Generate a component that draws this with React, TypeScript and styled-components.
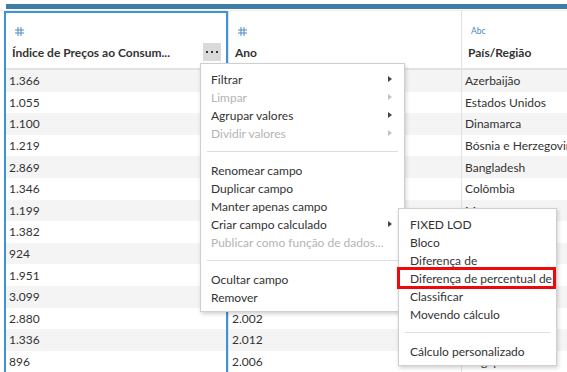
import * as React from 'react';
import styled, { createGlobalStyle } from 'styled-components';

const GlobalStyle = createGlobalStyle`
  html, body {
    margin: 0;
    padding: 0;
    background: #ffffff;
    overflow: hidden;
  }
  body {
    font-family: Lato, 'Open Sans', 'Liberation Sans', sans-serif;
    font-size: 12px;
    color: #333333;
  }
`;

enum Colors {
  text = '#333333',
  disabled = '#b4b4b4',
  selected = '#3d93da',
  icon = '#4a8ac0',
  stripe = '#f4f4f4',
  grid = '#e2e2e2',
}

type ColumnData = {
  type: 'number' | 'text';
  title: string;
  width: number;
  selected?: boolean;
  values: string[];
};

const columns: ColumnData[] = [
  {
    type: 'number',
    title: 'Índice de Preços ao Consum...',
    width: 224,
    selected: true,
    values: ['1.366', '1.055', '1.100', '1.219', '2.869', '1.346', '1.199', '1.382', '924', '1.951', '3.099', '2.880', '1.336', '896'],
  },
  {
    type: 'number',
    title: 'Ano',
    width: 233,
    values: ['2.005', '2.010', '2.008', '2.011', '2.003', '2.007', '2.009', '2.004', '2.001', '2.013', '2.000', '2.002', '2.012', '2.006'],
  },
  {
    type: 'text',
    title: 'País/Região',
    width: 200,
    values: ['Azerbaijão', 'Estados Unidos', 'Dinamarca', 'Bósnia e Herzegovina', 'Bangladesh', 'Colômbia', 'Marrocos', 'Chile', 'Nepal', 'Peru', 'Grécia', 'Quênia', 'Índia', 'Singapura'],
  },
];

type MenuEntry = { label?: string; disabled?: boolean; submenu?: boolean; separator?: boolean; highlighted?: boolean };

const mainMenu: MenuEntry[] = [
  { label: 'Filtrar', submenu: true },
  { label: 'Limpar', submenu: true, disabled: true },
  { label: 'Agrupar valores', submenu: true },
  { label: 'Dividir valores', submenu: true, disabled: true },
  { separator: true },
  { label: 'Renomear campo' },
  { label: 'Duplicar campo' },
  { label: 'Manter apenas campo' },
  { label: 'Criar campo calculado', submenu: true },
  { label: 'Publicar como função de dados...', disabled: true },
  { separator: true },
  { label: 'Ocultar campo' },
  { label: 'Remover' },
];

const calcMenu: MenuEntry[] = [
  { label: 'FIXED LOD' },
  { label: 'Bloco' },
  { label: 'Diferença de' },
  { label: 'Diferença de percentual de', highlighted: true },
  { label: 'Classificar' },
  { label: 'Movendo cálculo' },
  { separator: true },
  { label: 'Cálculo personalizado' },
];

const Page = styled.div`
  position: relative;
  width: 567px;
  height: 372px;
  overflow: hidden;
`;

const TopStrip = styled.div`
  height: 11px;
  padding: 4px 0 0 6px;
  box-sizing: border-box;
  border-bottom: 1px solid #ececec;
`;

const ScrollBar = styled.div`
  height: 5px;
  background: #3f7ca8;
`;

const Grid = styled.div`
  display: flex;
  padding-left: 4px;
`;

const Column = styled.div<{ $selected?: boolean; $width: number }>`
  flex: 0 0 ${(p) => p.$width}px;
  box-sizing: border-box;
  display: flex;
  flex-direction: column;
  border-left: ${(p) => (p.$selected ? `2px solid ${Colors.selected}` : `1px solid ${Colors.grid}`)};
  border-right: ${(p) => (p.$selected ? `2px solid ${Colors.selected}` : 'none')};
`;

const Header = styled.div<{ $selected?: boolean }>`
  height: 59px;
  box-sizing: border-box;
  padding: 13px 5px 0 6px;
  border-top: 2px solid ${(p) => (p.$selected ? Colors.selected : 'transparent')};
  border-bottom: 2px solid ${Colors.grid};
  display: flex;
  flex-direction: column;
`;

const TypeIcon = styled.div`
  height: 10px;
  display: flex;
  align-items: center;
  padding-left: 3px;
  color: ${Colors.icon};
  font-size: 8.5px;
  line-height: 10px;
`;

const TitleRow = styled.div`
  margin-top: 7px;
  height: 18px;
  display: flex;
  align-items: center;
  justify-content: space-between;
`;

const Title = styled.div`
  font-weight: 700;
  font-size: 12px;
  color: ${Colors.text};
  white-space: nowrap;
`;

const MoreButton = styled.div`
  width: 18px;
  height: 18px;
  background: #dadada;
  display: flex;
  align-items: center;
  justify-content: center;
`;

const Cell = styled.div<{ $striped: boolean }>`
  height: 21.6px;
  display: flex;
  align-items: center;
  padding-left: 3px;
  background: ${(p) => (p.$striped ? Colors.stripe : '#ffffff')};
  white-space: nowrap;
  overflow: hidden;
  font-size: 12px;
  color: ${Colors.text};
`;

const Menu = styled.div<{ $left: number; $top: number; $width: number }>`
  position: absolute;
  left: ${(p) => p.$left}px;
  top: ${(p) => p.$top}px;
  width: ${(p) => p.$width}px;
  box-sizing: border-box;
  padding: 6px 0 5px;
  background: #ffffff;
  border: 1px solid #cfcfcf;
  box-shadow: 1px 2px 4px rgba(0, 0, 0, 0.18);
  display: flex;
  flex-direction: column;
`;

const MenuItem = styled.div<{ $disabled?: boolean; $highlighted?: boolean; $indent: number }>`
  position: relative;
  height: 18px;
  display: flex;
  align-items: center;
  justify-content: space-between;
  padding: 0 12px 0 ${(p) => p.$indent}px;
  font-size: 12px;
  white-space: nowrap;
  color: ${(p) => (p.$disabled ? Colors.disabled : Colors.text)};
  ${(p) =>
    p.$highlighted &&
    `
    &::after {
      content: '';
      position: absolute;
      left: -2px;
      right: 0;
      top: -2px;
      bottom: -2px;
      border: 3px solid #ee0a0a;
    }
  `}
`;

const Arrow = styled.span<{ $disabled?: boolean }>`
  width: 0;
  height: 0;
  border-top: 3.5px solid transparent;
  border-bottom: 3.5px solid transparent;
  border-left: 4px solid ${(p) => (p.$disabled ? '#c4c4c4' : '#444444')};
`;

const Separator = styled.div`
  height: 1px;
  margin: 9px 6px;
  background: #dedede;
`;

function HashIcon() {
  return (
    <svg width="9" height="9" viewBox="0 0 9 9">
      <g stroke={Colors.icon} strokeWidth="1" fill="none">
        <line x1="3" y1="0" x2="3" y2="9" />
        <line x1="6" y1="0" x2="6" y2="9" />
        <line x1="0" y1="3" x2="9" y2="3" />
        <line x1="0" y1="6" x2="9" y2="6" />
      </g>
    </svg>
  );
}

function DotsIcon() {
  return (
    <svg width="12" height="3" viewBox="0 0 12 3">
      <rect x="0" y="0" width="2" height="2" fill="#333" />
      <rect x="5" y="0" width="2" height="2" fill="#333" />
      <rect x="10" y="0" width="2" height="2" fill="#333" />
    </svg>
  );
}

function ContextMenu({ entries, left, top, width, indent }: { entries: MenuEntry[]; left: number; top: number; width: number; indent: number }) {
  return (
    <Menu $left={left} $top={top} $width={width}>
      {entries.map((e, i) =>
        e.separator ? (
          <Separator key={i} />
        ) : (
          <MenuItem key={i} $disabled={e.disabled} $highlighted={e.highlighted} $indent={indent}>
            <span>{e.label}</span>
            {e.submenu && <Arrow $disabled={e.disabled} />}
          </MenuItem>
        ),
      )}
    </Menu>
  );
}

export default function App() {
  return (
    <Page>
      <GlobalStyle />
      <TopStrip>
        <ScrollBar />
      </TopStrip>
      <Grid>
        {columns.map((col) => (
          <Column key={col.title} $selected={col.selected} $width={col.width}>
            <Header $selected={col.selected}>
              <TypeIcon>{col.type === 'number' ? <HashIcon /> : 'Abc'}</TypeIcon>
              <TitleRow>
                <Title>{col.title}</Title>
                {col.selected && (
                  <MoreButton>
                    <DotsIcon />
                  </MoreButton>
                )}
              </TitleRow>
            </Header>
            {col.values.map((v, i) => (
              <Cell key={i} $striped={i % 2 === 0}>
                {v}
              </Cell>
            ))}
          </Column>
        ))}
      </Grid>
      <ContextMenu entries={mainMenu} left={200} top={63} width={205} indent={10} />
      <ContextMenu entries={calcMenu} left={398} top={208} width={159} indent={11} />
    </Page>
  );
}
